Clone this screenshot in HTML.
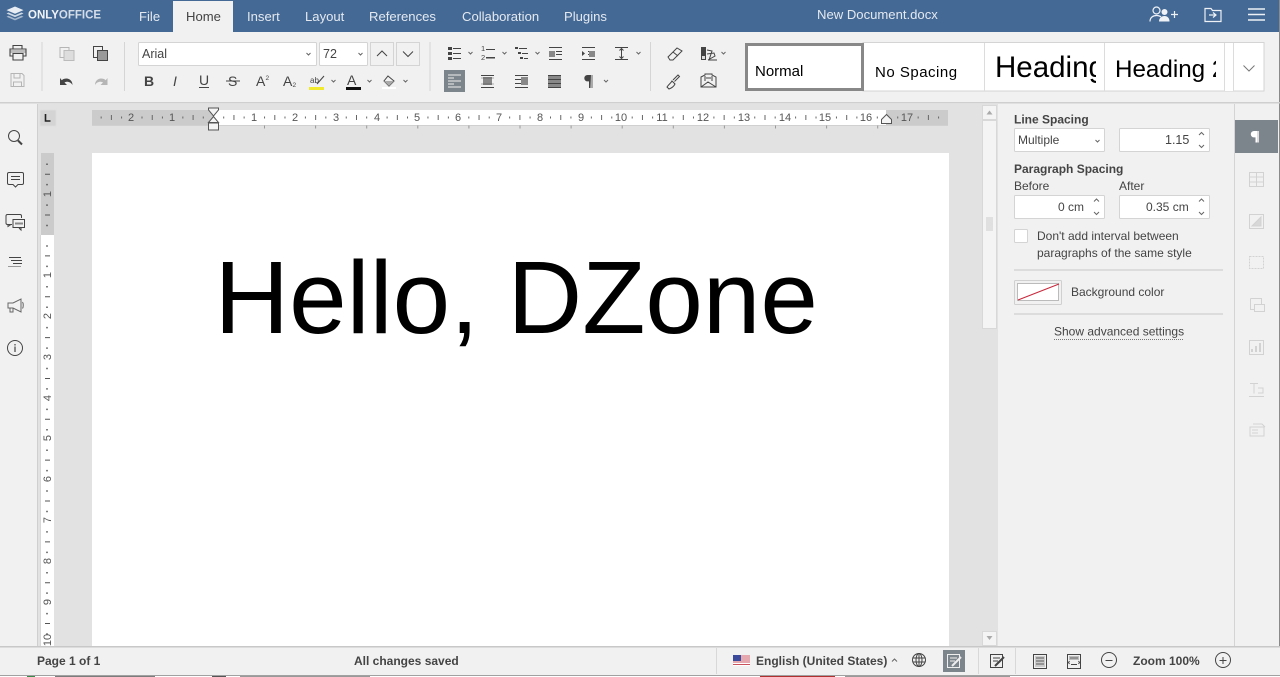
<!DOCTYPE html>
<html><head><meta charset="utf-8"><title>New Document.docx</title>
<style>
html,body{margin:0;padding:0;width:1280px;height:677px;overflow:hidden;background:#f1f1f1}
svg{display:block;position:absolute;left:0;top:0}
text{font-family:"Liberation Sans",Arial,sans-serif;fill:#444}
.tab{font-size:13.1px;fill:#e4e9f0}
.s{fill:none;stroke:#444;stroke-width:1}
.l{fill:none;stroke:#b5b5b5;stroke-width:1}
.c{fill:none;stroke:#666;stroke-width:1}
.f{fill:#fff;stroke:#d4d4d4;stroke-width:1}
.b{font-size:12px;font-weight:bold}
.t{font-size:12px}
.r{font-size:11px;fill:#555;text-anchor:middle}
</style></head><body>
<svg width="1280" height="677" viewBox="0 0 1280 677">
<!-- base -->
<rect width="1280" height="677" fill="#f1f1f1"/>
<rect width="1280" height="32" fill="#446995"/>
<rect x="173" y="1" width="60" height="32" fill="#f1f1f1"/>
<!-- logo -->
<g fill="#e8edf3">
<path d="M15 6.5l8.5 3.6-8.500 3.600-8.500-3.600z"/>
<path d="M8.500 12.500l6.500 2.800 6.500-2.800 2 1-8.500 3.600-8.500-3.600z" opacity=".85"/>
<path d="M8.500 15.800l6.500 2.800 6.500-2.800 2 1-8.500 3.600-8.500-3.600z" opacity=".6"/>
</g>
<text x="28" y="18.500" style="font-size:11.500px;font-weight:bold;fill:#f2f4f7">ONLY<tspan style="fill:#d5dde8">OFFICE</tspan></text>
<text x="139" y="21" class="tab">File</text>
<text x="186" y="21" class="tab" style="fill:#444">Home</text>
<text x="247" y="21" class="tab">Insert</text>
<text x="305" y="21" class="tab">Layout</text>
<text x="369" y="21" class="tab">References</text>
<text x="462" y="21" class="tab">Collaboration</text>
<text x="564" y="21" class="tab">Plugins</text>
<text x="817" y="19" class="tab">New Document.docx</text>
<!-- header right icons -->
<g fill="none" stroke="#eef1f5" stroke-width="1.200">
<circle cx="1156.500" cy="10.500" r="3.500"/>
<path d="M1150 21.500c0-4 3-6 6.500-6 2 0 3.500.6 4.500 1.500"/>
<path d="M1171 14.500h7M1174.500 11v7"/>
<path d="M1205 9.500v-1h6l1.500 2h8.500v11h-16z"/>
<path d="M1209 15h7M1213 12.500l3 2.500-3 2.500"/>
<path d="M1248 9h17M1248 14.500h17M1248 20h17" stroke-width="1.500"/>
</g>
<circle cx="1164.500" cy="12" r="3" fill="#eef1f5"/>
<path d="M1159 21.500c0-3.500 2.500-5.500 5.500-5.500s5 2 5 5.500z" fill="#eef1f5"/>
<rect x="1279" y="0" width="1" height="677" fill="#8a8a8a"/>

<!-- toolbar -->
<rect x="0" y="102" width="1280" height="1.500" fill="#cfcfcf"/>
<g fill="#d5d5d5">
<rect x="41.500" y="42" width="1" height="49"/><rect x="124" y="42" width="1" height="49"/><rect x="429.500" y="42" width="1" height="49"/><rect x="650" y="42" width="1" height="49"/>
</g>
<!-- printer -->
<path class="s" d="M13 49v-3.500h9V49M13 56h-3v-7h16v7h-3M13 53.500h10V60H13z" style="stroke-width:1.100"/>
<path d="M10 50h16v3H10z" fill="#444" opacity=".3"/>
<!-- save -->
<path class="l" d="M11 73.500h11l2 2v11H11zM14 74v4h6v-4M13.500 86v-4h8v4"/>
<!-- copy -->
<path class="l" d="M60 47.500h9v10h-9z"/><path d="M64 50.500h10v10H64z" fill="#ddd" stroke="#bbb"/>
<!-- paste -->
<path class="s" d="M93.500 46.500h9v11h-9z"/><path d="M97.500 50.500h10v10h-10z" fill="#999" stroke="#444"/>
<!-- undo redo -->
<path d="M60 78v7h7l-2.500-2.500c2.500-1.500 6-.8 8 2.500 0-4-3-6.500-6-6.500-1.700 0-3.500.5-4.700 1.700z" fill="#444"/>
<path d="M107.500 78v7h-7l2.500-2.500c-2.500-1.500-6-.8-8 2.500 0-4 3-6.500 6-6.500 1.700 0 3.500.5 4.700 1.700z" fill="#b5b5b5"/>
<!-- font combos -->
<rect class="f" x="138.500" y="42.500" width="178" height="23" rx="1"/>
<rect class="f" x="319.500" y="42.500" width="48" height="23" rx="1"/>
<rect x="370.500" y="42.500" width="23" height="23" fill="#f1f1f1" stroke="#d4d4d4"/>
<rect x="396.500" y="42.500" width="23" height="23" fill="#f1f1f1" stroke="#d4d4d4"/>
<text x="142" y="58" style="font-size:12.500px">Arial</text>
<text x="323" y="58" style="font-size:12.500px">72</text>
<path class="c" d="M306.500 53l2 2 2-2M358.500 53l2 2 2-2"/>
<path class="s" d="M377 56l5-5 5 5M403 51.500l5 5 5-5"/>
<!-- row 2 font formatting -->
<text x="144" y="86" style="font-size:14px;font-weight:bold">B</text>
<text x="173" y="86" style="font-size:14px;font-style:italic">I</text>
<text x="199" y="85" style="font-size:14px">U</text><rect x="199" y="87" width="10" height="1" fill="#444"/>
<text x="228" y="86" style="font-size:14px">S</text><rect x="226" y="80.500" width="14" height="1" fill="#444"/>
<text x="256" y="86" style="font-size:14px">A</text><text x="265.500" y="80" style="font-size:6.500px">2</text>
<text x="283" y="86" style="font-size:14px">A</text><text x="292.500" y="87" style="font-size:6.500px">2</text>
<text x="310" y="83" style="font-size:8px">ab</text><path class="s" d="M317 84l7-8"/>
<rect x="309" y="87" width="15" height="3" fill="#f1e92c"/>
<path class="c" d="M331.500 80l2 2 2-2M367.500 80l2 2 2-2M403.500 80l2 2 2-2"/>
<text x="347" y="85" style="font-size:14px">A</text><rect x="346" y="87" width="15" height="3" fill="#111"/>
<path class="s" d="M388 76l6 5-5 5-5-5z"/><path d="M384 81h10l-5 5z" fill="#aaa"/>
<rect x="382" y="87" width="14" height="2" fill="#fff"/>
<!-- paragraph row 1 -->
<g fill="#444">
<rect x="448" y="47" width="4" height="3"/><rect x="448" y="52" width="4" height="3"/><rect x="448" y="57" width="4" height="3"/>
<rect x="453" y="48" width="8" height="1"/><rect x="453" y="53" width="8" height="1"/><rect x="453" y="58" width="8" height="1"/>
<rect x="486" y="49" width="9" height="1"/><rect x="486" y="57" width="9" height="1.500"/>
<rect x="515" y="47" width="3" height="2"/><rect x="519" y="48" width="8" height="1"/><rect x="518" y="52" width="3" height="2"/><rect x="522" y="53" width="6" height="1"/><rect x="520" y="57" width="3" height="2"/><rect x="524" y="58" width="4" height="1"/>
</g>
<text x="481" y="51" style="font-size:7.500px">1</text><text x="481" y="60" style="font-size:7.500px">2</text>
<path class="c" d="M468.500 52l2 2 2-2M502.500 52l2 2 2-2M535.500 52l2 2 2-2M636.500 52l2 2 2-2"/>
<path class="s" d="M549 47.500h13M556 51.500h6M556 54.500h6M549 59.500h13"/><path d="M549 51h6v6h-6z" fill="#888"/>
<path class="s" d="M582 47.500h13M588 51.500h7M588 54.500h7M582 59.500h13"/><path d="M589 51h6v6h-6z" fill="#888"/><path d="M582 51l3 2.500-3 2.500z" fill="#444"/>
<path class="s" d="M615 47.500h13M615 59.500h13M621.500 49v9"/><path d="M619.500 50.500l2-2 2 2M619.500 56.500l2 2 2-2" class="s"/>
<!-- paragraph row 2 -->
<rect x="444" y="70" width="21" height="22" fill="#7d858c"/>
<path d="M448 75h13M448 78h6M448 81h13M448 84h6M448 87h13" stroke="#eee" fill="none"/>
<path class="s" d="M481 75.500h13M481 87.500h13"/><rect x="483" y="77" width="9" height="8" fill="#888"/><path d="M481 78h13M481 84h13" stroke="#444" opacity=".4"/>
<path class="s" d="M515 75.500h13M515 87.500h13M515 79.500h6M515 83.500h6"/><rect x="521" y="77" width="7" height="8" fill="#888"/>
<rect x="548" y="75" width="13" height="13" fill="#888"/><path d="M548 75.500h13M548 79.500h13M548 83.500h13M548 87.500h13" stroke="#444" fill="none"/>
<path d="M591 75h-3.500a3.200 3.200 0 0 0 0 6.400h1.500V88h1.500z" fill="#444"/><rect x="591" y="75" width="2" height="13" fill="#aaa"/>
<path class="c" d="M604 80l2 2 2-2"/>
<!-- eraser etc -->
<path class="s" d="M668 57l9-9 5 3-9 9h-3z M673 52l5 4"/>
<path class="s" d="M667 87c2-3 4-4 5-6l3 3c-1 2-3 4-6 5zM673 80l5-5 1.500 1.500-5 5"/>
<rect x="701" y="47" width="5" height="13" fill="#444"/><rect x="702" y="56" width="3" height="3" fill="#ddd"/>
<path class="s" d="M707 50l5 1-3 9M707 54l7-1 1 3-7 4M708 60h9"/>
<path class="c" d="M721.500 52l2 2 2-2"/>
<path class="s" d="M701 77l4-2v-1h7v1l4 2v10h-15zM701 87l7-5 8 5M705 76v5M712 76v5M706 78h5"/>
<!-- styles gallery -->
<rect x="863" y="42.500" width="401" height="48.500" fill="#fff" stroke="#d4d4d4"/>
<rect x="746.500" y="44.500" width="116" height="45" fill="#fff" stroke="#888" stroke-width="3"/>
<text x="755" y="76" style="font-size:15px;fill:#000">Normal</text>
<text x="875" y="77" style="font-size:15px;letter-spacing:.5px;fill:#000">No Spacing</text>
<svg x="990" y="44" width="106" height="46" viewBox="0 0 106 46"><text x="5" y="33" style="font-size:29.500px;fill:#000">Heading</text></svg>
<svg x="1110" y="44" width="106" height="46" viewBox="0 0 106 46"><text x="5" y="33" style="font-size:24.200px;fill:#000">Heading 2</text></svg>
<g fill="#dcdcdc"><rect x="984" y="43" width="1" height="48"/><rect x="1104" y="43" width="1" height="48"/><rect x="1224" y="43" width="1" height="48"/><rect x="1233" y="43" width="1" height="48"/></g>
<rect x="1225" y="43" width="8" height="48" fill="#fff"/>
<path d="M1243.500 65.500l5.500 5.500 5.500-5.500" fill="none" stroke="#777"/>

<!-- main canvas -->
<rect x="37" y="104" width="961" height="543" fill="#e2e2e2"/>
<rect x="37" y="104" width="1" height="543" fill="#cfcfcf"/>
<rect x="92" y="153" width="857" height="494" fill="#fff"/>
<text x="214.500" y="333" style="font-size:103.400px;fill:#000">Hello, DZone</text>
<!-- ruler corner -->
<rect x="40" y="110" width="16" height="16" fill="#d4d4d4" stroke="#ddd"/>
<path d="M45.500 114v7h5" fill="none" stroke="#222" stroke-width="1.600"/>
<!-- horizontal ruler -->
<rect x="92" y="110" width="856" height="15" fill="#cbcbcb"/>
<rect x="213" y="110" width="673" height="15" fill="#fff"/>
<rect x="92" y="125" width="856" height="1" fill="#d0d0d0"/>
<line x1="100.650" y1="117.500" x2="948" y2="117.500" stroke="#666" stroke-width="2" stroke-dasharray="1 19.425"/>
<line x1="110.900" y1="117.500" x2="948" y2="117.500" stroke="#666" stroke-width="5" stroke-dasharray="1 39.850"/>
<g class="rr">
<text x="131" y="121" class="r">2</text><text x="172" y="121" class="r">1</text>
<text x="254" y="121" class="r">1</text><text x="295" y="121" class="r">2</text><text x="336" y="121" class="r">3</text><text x="377" y="121" class="r">4</text><text x="417" y="121" class="r">5</text><text x="458" y="121" class="r">6</text><text x="499" y="121" class="r">7</text><text x="540" y="121" class="r">8</text><text x="581" y="121" class="r">9</text><text x="621" y="121" class="r">10</text><text x="662" y="121" class="r">11</text><text x="703" y="121" class="r">12</text><text x="744" y="121" class="r">13</text><text x="785" y="121" class="r">14</text><text x="825" y="121" class="r">15</text><text x="866" y="121" class="r">16</text><text x="907" y="121" class="r">17</text>
</g>
<line x1="264" y1="127" x2="900" y2="127" stroke="#999" stroke-width="3" stroke-dasharray="1 50.100"/>
<!-- ruler markers -->
<path d="M208.500 108h10v2l-5 6-5-6zM208.500 122.500l5-6 5 6z" fill="#f4f4f4" stroke="#555"/>
<rect x="208.500" y="123" width="10" height="7" fill="#f4f4f4" stroke="#555"/>
<path d="M881.500 123.500v-4l5-5 5 5v4z" fill="#f4f4f4" stroke="#555"/>
<!-- vertical ruler -->
<rect x="41" y="153" width="13" height="82" fill="#cbcbcb"/>
<rect x="41" y="235" width="13" height="412" fill="#fff"/>
<rect x="40" y="235" width="1" height="412" fill="#d8d8d8"/>
<line x1="47" y1="163.500" x2="47" y2="646" stroke="#555" stroke-width="1.500" stroke-dasharray="1.500 18.925"/>
<line x1="47.500" y1="173.700" x2="47.500" y2="646" stroke="#555" stroke-width="5" stroke-dasharray="1 39.850"/>
<g>
<text transform="translate(51,194) rotate(-90)" class="r">1</text>
<text transform="translate(51,275) rotate(-90)" class="r">1</text>
<text transform="translate(51,316) rotate(-90)" class="r">2</text>
<text transform="translate(51,357) rotate(-90)" class="r">3</text>
<text transform="translate(51,398) rotate(-90)" class="r">4</text>
<text transform="translate(51,438) rotate(-90)" class="r">5</text>
<text transform="translate(51,479) rotate(-90)" class="r">6</text>
<text transform="translate(51,520) rotate(-90)" class="r">7</text>
<text transform="translate(51,561) rotate(-90)" class="r">8</text>
<text transform="translate(51,602) rotate(-90)" class="r">9</text>
<text transform="translate(51,640) rotate(-90)" class="r">10</text>
</g>
<!-- left bar -->
<rect x="0" y="104" width="37" height="543" fill="#f1f1f1"/>
<circle cx="14" cy="136" r="5.500" class="s"/><path d="M18 140.500l4 4" stroke="#444" stroke-width="2"/>
<path class="s" d="M9 172.500h13a1.500 1.500 0 0 1 1.500 1.500v9a1.500 1.500 0 0 1-1.500 1.500h-4l-2.500 2.500-2.500-2.500H9a1.500 1.500 0 0 1-1.500-1.500v-9A1.500 1.500 0 0 1 9 172.500zM11 176.500h9M11 179.500h9"/>
<path class="s" d="M12 224.500H7.500a1.500 1.500 0 0 1-1.500-1.500v-7a1.500 1.500 0 0 1 1.500-1.500H20a1.500 1.500 0 0 1 1.500 1.500v2M8 224.500v2l3-2M13 219.500h11.500v8H13zM21 228v2l-2-2"/>
<path d="M15 222.500h8v2h-8z" fill="#444" opacity=".6"/>
<path class="s" d="M9 257.500h12M11 260.500h11M13 263.500h9"/><path d="M8 266.500h13" stroke="#999" fill="none"/>
<path class="c" d="M8 303h5l8-4v13l-8-4H8zM10 308v4h3v-4M22.500 302c1 1.500 1 5 0 6.500"/>
<circle cx="15" cy="348" r="7.500" class="s"/><path class="s" d="M15 346.500v5.500M15 344v1.500" style="stroke-width:1.200"/>

<!-- right scrollbar -->
<rect x="982.500" y="105.500" width="14" height="14" fill="#f4f4f4" stroke="#d8d8d8"/>
<path d="M986.500 114.500l3-4 3 4z" fill="#aaa"/>
<rect x="982.500" y="120.500" width="14" height="208" fill="#f4f4f4" stroke="#d8d8d8"/>
<path d="M986 218h7M986 220h7M986 222h7M986 224h7M986 226h7M986 228h7M986 230h7" stroke="#ccc" fill="none"/>
<rect x="982.500" y="631.500" width="14" height="14" fill="#f4f4f4" stroke="#d8d8d8"/>
<path d="M986.500 636l3 4 3-4z" fill="#aaa"/>

<!-- right panel -->
<rect x="998" y="104" width="281" height="543" fill="#f1f1f1"/>
<rect x="1234" y="104" width="1" height="543" fill="#d4d4d4"/>
<text x="1014" y="123.500" class="b">Line Spacing</text>
<rect class="f" x="1014.500" y="128.500" width="90" height="23" rx="1"/>
<text x="1018" y="144" class="t">Multiple</text><path class="c" d="M1095.500 140l2 2 2-2"/>
<rect class="f" x="1119.500" y="128.500" width="90" height="23" rx="1"/>
<text x="1165" y="144" style="font-size:12.500px">1.15</text>
<path class="c" d="M1199 135l2.500-2.500 2.500 2.500M1199 145l2.500 2.500 2.500-2.500"/>
<text x="1014" y="173" class="b">Paragraph Spacing</text>
<text x="1014" y="190" class="t">Before</text>
<text x="1119" y="190" class="t">After</text>
<rect class="f" x="1014.500" y="195.500" width="90" height="23" rx="1"/>
<text x="1058" y="211" class="t">0 cm</text>
<path class="c" d="M1094 201.500l2.500-2.500 2.500 2.500M1094 212l2.500 2.500 2.500-2.500"/>
<rect class="f" x="1119.500" y="195.500" width="90" height="23" rx="1"/>
<text x="1146" y="211" class="t">0.35 cm</text>
<path class="c" d="M1199 201.500l2.500-2.500 2.500 2.500M1199 212l2.500 2.500 2.500-2.500"/>
<rect class="f" x="1014.500" y="229.500" width="13" height="13" rx="1"/>
<text x="1037" y="240" class="t">Don't add interval between</text>
<text x="1037" y="257" class="t">paragraphs of the same style</text>
<rect x="1014" y="269" width="209" height="2" fill="#dcdcdc"/>
<rect x="1014.500" y="280.500" width="47" height="24" fill="#f1f1f1" stroke="#d0d0d0" rx="1"/>
<rect x="1017.500" y="283.500" width="41" height="17" fill="#fff" stroke="#bbb"/>
<path d="M1018 300l41-16" stroke="#c8283c" stroke-width="1.100" fill="none"/>
<text x="1071" y="296" class="t">Background color</text>
<rect x="1014" y="313" width="209" height="2" fill="#dcdcdc"/>
<text x="1054" y="335.500" class="t">Show advanced settings</text>
<line x1="1054" y1="339.500" x2="1183" y2="339.500" stroke="#777" stroke-dasharray="1 1"/>
<!-- right tabs -->
<rect x="1235" y="120" width="43" height="33" fill="#7d858c"/>
<path d="M1258 131h-4a3.200 3.200 0 0 0 0 6.400h1.500v5.100h1.500V131z" fill="#fff"/><rect x="1257" y="131" width="2" height="11.500" fill="#ddd"/>
<g fill="none" stroke="#d2d2d2">
<path d="M1249.500 172.500h14v14h-14zM1249.500 177h14M1249.500 182h14M1256.500 172.500v14"/>
<path d="M1249.500 214.500h14v14h-14z"/><path d="M1252 226l9-9v9z" fill="#d8d8d8"/>
<path d="M1249.500 256.500h14v12h-14z" stroke-dasharray="2 1"/>
<path d="M1250.500 298.500h11v6M1250.500 298.500v11h4M1254.500 304.500h10v7h-10z"/>
<path d="M1249.500 340.500h14v14h-14z"/><path d="M1252 352v-3M1256 352v-6M1260 352v-9" stroke-width="2"/>
<path d="M1250 383.500h8M1254 383.500v10M1258 388h5v5h-5M1249 396.500h15"/>
<path d="M1250 427h14v9h-14zM1253 424h9l3 3M1252 430h6M1252 433h6"/>
</g>

<!-- status bar -->
<rect x="0" y="646" width="1280" height="1.500" fill="#c8c8c8"/>
<rect x="0" y="647.500" width="1280" height="27.500" fill="#f1f1f1"/>
<text x="37" y="665" class="b">Page 1 of 1</text>
<text x="354" y="665" class="b">All changes saved</text>
<g fill="#d8d8d8"><rect x="716" y="648" width="1" height="26"/><rect x="978" y="648" width="1" height="26"/><rect x="1015" y="648" width="1" height="26"/></g>
<!-- flag -->
<rect x="733" y="655" width="17" height="11" fill="#fff"/>
<path d="M733 656h17M733 658h17M733 660h17M733 662h17M733 664.500h17" stroke="#c9525d" stroke-width="1.100" fill="none"/>
<rect x="733" y="655" width="8" height="6" fill="#3c4a9c"/>
<text x="756" y="665" class="b">English (United States)</text>
<path class="c" d="M892 661.500l2.500-2.500 2.500 2.500"/>
<!-- globe -->
<circle cx="919" cy="660" r="6.500" class="s"/><ellipse cx="919" cy="660" rx="3" ry="6.500" class="s"/><path class="s" d="M912.500 658h13M912.500 662h13M919 653.500v13"/>
<!-- spell -->
<rect x="943" y="650" width="22" height="22" fill="#7d858c"/>
<path d="M947.500 654.500h12v13h-12zM950 658h7M950 661h5" fill="none" stroke="#eee"/><path d="M952 666l9-9" stroke="#eee" stroke-width="2"/>
<!-- track -->
<path class="s" d="M990.500 654.500h12v13h-12zM993 658h7M993 661h5"/><path d="M995 666l9-9" stroke="#444" stroke-width="2"/>
<!-- page views -->
<rect x="1033.500" y="654.500" width="13" height="14" class="s"/><path d="M1036 658h8M1036 661h8M1036 664h8" stroke="#444" fill="none"/><rect x="1035" y="656" width="10" height="11" fill="#888" opacity=".35"/>
<rect x="1067.500" y="654.500" width="13" height="14" class="s"/><path d="M1070 658h8M1069.500 661l-1 1.500 1 1.500M1078.500 661l1 1.500-1 1.500M1071 664.500h6" class="s"/><rect x="1069" y="656" width="10" height="4" fill="#888" opacity=".5"/>
<!-- zoom -->
<circle cx="1109" cy="660" r="7.500" class="s"/><path class="s" d="M1105.500 660.500h7"/>
<text x="1133" y="665" class="b">Zoom 100%</text>
<circle cx="1223" cy="660" r="7.500" class="s"/><path class="s" d="M1219.500 660.500h7M1223 657v7"/>
<!-- strip below window -->
<rect x="0" y="675" width="1280" height="2" fill="#fff"/>
<rect x="0" y="675" width="1280" height=".8" fill="#8a8a8a"/>
<rect x="27" y="676" width="8" height="1" fill="#3a8a4a"/>
<rect x="55" y="676" width="100" height="1" fill="#444" opacity=".7"/>
<rect x="212" y="676" width="14" height="1" fill="#555"/>
<rect x="240" y="676" width="130" height="1" fill="#555" opacity=".6"/>
<rect x="760" y="676" width="75" height="1" fill="#b03030"/>
<rect x="845" y="676" width="165" height="1" fill="#555" opacity=".6"/>
</svg>
</body></html>
